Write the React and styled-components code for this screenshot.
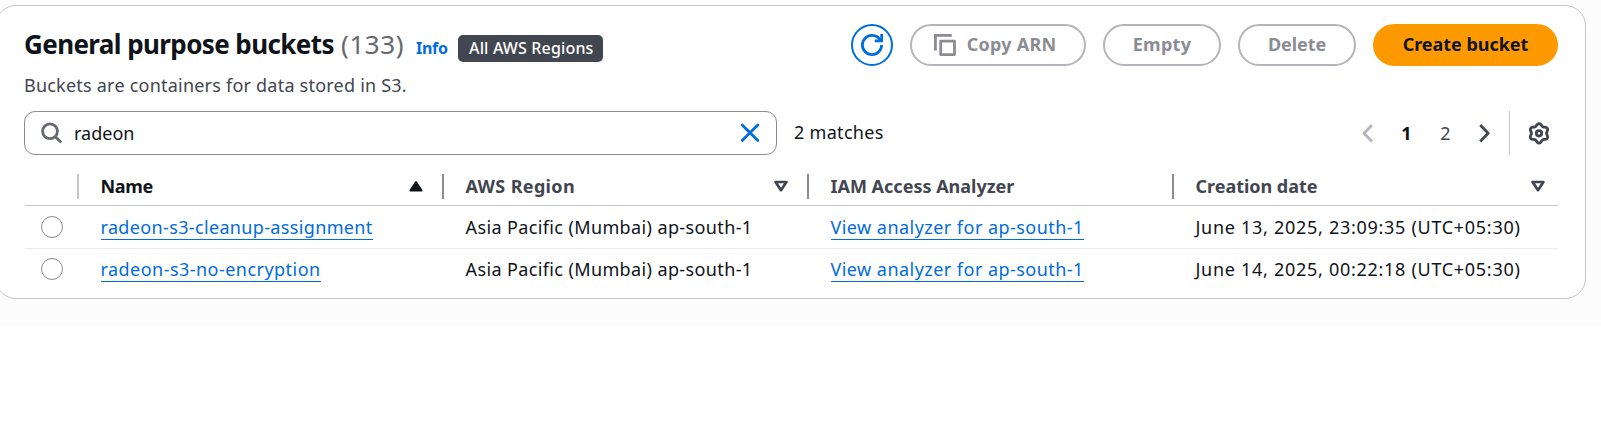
import React from "react";
import styled, { createGlobalStyle } from "styled-components";

const c = {
  text: "#0f141a",
  secondary: "#424650",
  muted: "#656871",
  blue: "#006ce0",
  disabled: "#8c8c94",
  disabledBorder: "#b4b4bb",
  divider: "#c6c6cd",
};

const Global = createGlobalStyle`
  * { box-sizing: border-box; }
  body {
    margin: 0;
    background: #fff;
    color: ${c.text};
    font-family: "Noto Sans", "Open Sans", sans-serif;
    font-size: 18px;
    overflow: hidden;
  }
  svg { display: block; flex: none; fill: none; stroke: currentColor; stroke-width: 2.8; }
`;

const Page = styled.main`
  height: 326px;
  padding-top: 5px;
  background: #fcfcfd;
`;

const Card = styled.section`
  width: 1591px;
  height: 294px;
  margin-left: -5px;
  padding: 18px 27px 0 28px;
  background: #fff;
  border: 1px solid ${c.divider};
  border-radius: 21px;
`;

const Header = styled.header`
  display: flex;
  justify-content: space-between;
  height: 42px;
`;

const TitleRow = styled.div`
  display: flex;
  align-items: baseline;
  white-space: nowrap;
`;

const Title = styled.h2`
  width: 317px;
  margin: 0;
  font-size: 26px;
  font-weight: 700;
  line-height: 40px;
  letter-spacing: -0.6px;
`;

const Count = styled.span`
  width: 75px;
  color: ${c.muted};
  font-size: 26px;
  line-height: 40px;
  letter-spacing: 0.6px;
`;

const Info = styled.a`
  width: 42px;
  color: ${c.blue};
  font-size: 16px;
  font-weight: 700;
  letter-spacing: -0.3px;
`;

const Badge = styled.span`
  width: 145px;
  height: 27px;
  padding-left: 11px;
  border-radius: 5px;
  background: ${c.secondary};
  color: #fff;
  font-size: 16px;
  font-weight: 500;
  line-height: 26px;
  letter-spacing: 0.15px;
`;

const Actions = styled.div`
  display: flex;
  gap: 17px;
`;

const Button = styled.button`
  display: flex;
  align-items: center;
  justify-content: center;
  gap: 11px;
  width: ${(p) => p.$width}px;
  height: 42px;
  padding: 0 0 2px;
  border: 2px solid ${c.disabledBorder};
  border-radius: 21px;
  background: #fff;
  color: ${c.disabled};
  font: 700 18px/24px "Noto Sans", sans-serif;
  letter-spacing: ${(p) => p.$spacing || 0}px;
  white-space: nowrap;
`;

const RefreshButton = styled(Button)`
  padding: 0;
  border-color: ${c.blue};
  color: ${c.blue};
`;

const CopyButton = styled(Button)`
  padding-right: 6px;
  svg { margin-top: 2px; }
`;

const PrimaryButton = styled(Button)`
  border-color: #ff9900;
  background: #ff9900;
  color: ${c.text};
`;

const Description = styled.p`
  margin: 7px 0 14px;
  color: ${c.secondary};
  line-height: 24px;
  letter-spacing: 0.22px;
`;

const Toolbar = styled.div`
  display: flex;
  align-items: center;
  height: 44px;
`;

const SearchBox = styled.div`
  display: flex;
  align-items: center;
  width: 753px;
  height: 44px;
  padding: 0 16px;
  border: 1px solid ${c.disabled};
  border-radius: 11px;
  svg:first-child { color: ${c.muted}; }
  svg:last-child { color: ${c.blue}; }
`;

const Query = styled.span`
  flex: 1;
  padding-left: 11px;
  line-height: 24px;
`;

const Matches = styled.span`
  flex: 1;
  padding: 0 0 2px 17px;
  line-height: 24px;
  letter-spacing: 0.3px;
`;

const Pagination = styled.nav`
  display: flex;
  margin-right: 5px;
`;

const PageItem = styled.span`
  display: flex;
  align-items: center;
  justify-content: center;
  width: 39px;
  height: 24px;
  color: ${(p) => p.$color || c.secondary};
  font-weight: ${(p) => (p.$current ? 700 : 400)};
`;

const Settings = styled.div`
  display: flex;
  align-items: center;
  height: 44px;
  padding: 0 8px 0 18px;
  border-left: 1px solid ${c.divider};
  color: ${c.secondary};
`;

const Table = styled.div`
  margin: 12px 0 0 1px;
`;

const Row = styled.div`
  display: grid;
  grid-template-columns: 52px 365px 365px 365px 1fr;
  align-items: center;
  height: ${(p) => p.$height}px;
  border-bottom: ${(p) => (p.$line ? `1px solid ${p.$line}` : "none")};
`;

const HeadCell = styled.div`
  display: flex;
  align-items: center;
  justify-content: space-between;
  height: 25px;
  padding: 0 19px 1px 21.5px;
  border-left: 2px solid ${(p) => p.$border || c.disabled};
  color: ${(p) => (p.$sorted ? c.text : c.secondary)};
  font-weight: 700;
  letter-spacing: ${(p) => p.$spacing}px;
  &:last-child { padding-right: 13px; }
`;

const Cell = styled.div`
  padding-left: 23.5px;
  line-height: 24px;
  letter-spacing: ${(p) => p.$spacing}px;
  white-space: nowrap;
`;

const Link = styled.a`
  display: inline-block;
  height: 25px;
  margin-bottom: -1px;
  border-bottom: 1px solid ${c.blue};
  color: ${c.blue};
`;

const Radio = styled.span`
  width: 22px;
  height: 22px;
  margin-left: 16px;
  border: 1.3px solid ${c.disabled};
  border-radius: 50%;
  background: #fff;
`;

const RefreshIcon = () => (
  <svg width="22" height="22" viewBox="0 0 16 16" strokeWidth="2">
    <g strokeWidth="2">
      <path d="M10 5h5V0" />
      <path d="M15 8a7 7 0 0 1-14 0 7 7 0 0 1 7-7 6.9 6.9 0 0 1 6.3 4" />
    </g>
  </svg>
);

const CopyIcon = () => (
  <svg width="22" height="22" viewBox="0 0 22 22">
    <path d="M1.4 16.5V1.4h16.4" />
    <path d="M6.7 7.1h13.8v13.5H6.7z" strokeLinejoin="round" />
  </svg>
);

const SearchIcon = () => (
  <svg width="22" height="22" viewBox="0 0 22 22">
    <circle cx="9" cy="9.2" r="7.4" />
    <path d="m14.2 14.4 6 6" />
  </svg>
);

const CloseIcon = () => (
  <svg width="20" height="20" viewBox="0 0 20 20">
    <path d="m2.2 2 15.6 15.6M17.8 2 2.2 17.6" strokeLinecap="round" />
  </svg>
);

const Chevron = ({ right }) => (
  <svg width="12" height="20" viewBox="0 0 12 20">
    <path d={right ? "m1.2 2 8 8.2-8 8.2" : "m10 2-8 8.2 8 8.2"} strokeLinejoin="round" />
  </svg>
);

const gearOutline = Array.from({ length: 72 }, (_, i) => {
  const a = (i * Math.PI) / 36;
  const r = 8.6 + 1.1 * Math.cos(6 * a);
  return `${(11 + r * Math.sin(a)).toFixed(2)} ${(11.3 - r * Math.cos(a)).toFixed(2)}`;
}).join(" ");

const GearIcon = () => (
  <svg width="22" height="23" viewBox="0 0 22 23">
    <polygon points={gearOutline} />
    <circle cx="11" cy="11.3" r="2.7" />
  </svg>
);

const SortIcon = ({ filled }) => (
  <svg width="14" height="12" viewBox="0 0 14 12" strokeLinejoin="round">
    {filled ? (
      <path d="M7 2 12.6 10.6H1.4z" fill="currentColor" style={{ strokeWidth: 2 }} />
    ) : (
      <path d="M1.6 2h10.8L7 10.2z" style={{ strokeWidth: 2.7 }} />
    )}
  </svg>
);

const buckets = [
  { name: "radeon-s3-cleanup-assignment", spacing: 0.35, date: "June 13, 2025, 23:09:35 (UTC+05:30)" },
  { name: "radeon-s3-no-encryption", spacing: 0.46, date: "June 14, 2025, 00:22:18 (UTC+05:30)" },
];

export default function App() {
  return (
    <>
      <Global />
      <Page>
        <Card>
          <Header>
            <TitleRow>
              <Title>General purpose buckets</Title>
              <Count>(133)</Count>
              <Info>Info</Info>
              <Badge>All AWS Regions</Badge>
            </TitleRow>
            <Actions>
              <RefreshButton $width={42} aria-label="Refresh"><RefreshIcon /></RefreshButton>
              <CopyButton $width={176} $spacing={0.25}><CopyIcon />Copy ARN</CopyButton>
              <Button $width={118} $spacing={0.28}>Empty</Button>
              <Button $width={118} $spacing={-0.08}>Delete</Button>
              <PrimaryButton $width={185} $spacing={-0.03}>Create bucket</PrimaryButton>
            </Actions>
          </Header>
          <Description>Buckets are containers for data stored in S3.</Description>
          <Toolbar>
            <SearchBox>
              <SearchIcon />
              <Query>radeon</Query>
              <CloseIcon />
            </SearchBox>
            <Matches>2 matches</Matches>
            <Pagination>
              <PageItem $color={c.disabledBorder}><Chevron /></PageItem>
              <PageItem $current $color={c.text}>1</PageItem>
              <PageItem>2</PageItem>
              <PageItem><Chevron right /></PageItem>
            </Pagination>
            <Settings><GearIcon /></Settings>
          </Toolbar>
          <Table>
            <Row $height={39} $line={c.divider}>
              <span />
              <HeadCell $sorted $border={c.divider} $spacing={-0.35}>Name<SortIcon filled /></HeadCell>
              <HeadCell $spacing={0.35}>AWS Region<SortIcon /></HeadCell>
              <HeadCell $spacing={0}>IAM Access Analyzer</HeadCell>
              <HeadCell $spacing={-0.03}>Creation date<SortIcon /></HeadCell>
            </Row>
            {buckets.map((b, i) => (
              <Row key={b.name} $height={i === 0 ? 43 : 40} $line={i === 0 ? "#ebebf0" : null}>
                <Radio />
                <Cell $spacing={b.spacing}><Link>{b.name}</Link></Cell>
                <Cell $spacing={0.38}>Asia Pacific (Mumbai) ap-south-1</Cell>
                <Cell $spacing={0.46}><Link>View analyzer for ap-south-1</Link></Cell>
                <Cell $spacing={0.71}>{b.date}</Cell>
              </Row>
            ))}
          </Table>
        </Card>
      </Page>
    </>
  );
}
